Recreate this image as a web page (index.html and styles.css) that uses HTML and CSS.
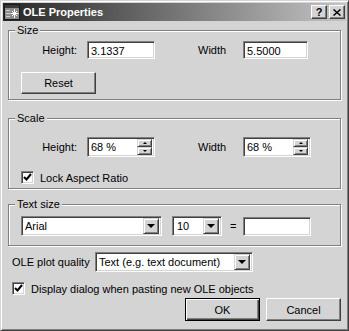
FILE: index.html
```html
<!DOCTYPE html>
<html lang="en">
<head>
  <meta charset="UTF-8" />
  <title>OLE Properties</title>
  <link rel="stylesheet" href="styles.css">
</head>
<body>
  <div class="window">
    <div class="titlebar">
      <svg class="app-icon" width="16" height="16" viewBox="0 0 16 16">
        <rect x="0.5" y="0.5" width="15" height="15" fill="#8c8c8c" stroke="#1a1a1a"/>
        <rect x="1" y="1" width="14" height="3" fill="#3a3a3a"/>
        <path d="M2 6.5h4M2 9.5h4M2 12.5h4" stroke="#cfcfcf"/>
        <path d="M10.5 5v9M6.5 9.5h8M8 7l5 5M13 7l-5 5" stroke="#fff"/>
      </svg>
      <span class="title">OLE Properties</span>
      <div class="caption-btns">
        <button class="cap-btn">?</button>
        <button class="cap-btn">
          <svg width="8" height="7" viewBox="0 0 8 7"><path d="M0.5 0.5l7 6M7.5 0.5l-7 6" stroke="#000" stroke-width="1.5"/></svg>
        </button>
      </div>
    </div>

    <div class="content">
      <fieldset class="group group-size">
        <legend>Size</legend>
        <div class="group-body size-body">
          <div class="row">
            <label class="lbl">Height:</label>
            <input class="field w68" value="3.1337">
            <label class="lbl2">Width</label>
            <input class="field w65" value="5.5000">
          </div>
          <button class="btn reset">Reset</button>
        </div>
      </fieldset>

      <fieldset class="group group-scale">
        <legend>Scale</legend>
        <div class="group-body scale-body">
          <div class="row">
            <label class="lbl">Height:</label>
            <div class="spin">
              <input value="68 %">
              <div class="spin-btns">
                <span class="spin-btn"><i class="arrow-up"></i></span>
                <span class="spin-btn"><i class="arrow-down"></i></span>
              </div>
            </div>
            <label class="lbl2">Width</label>
            <div class="spin">
              <input value="68 %">
              <div class="spin-btns">
                <span class="spin-btn"><i class="arrow-up"></i></span>
                <span class="spin-btn"><i class="arrow-down"></i></span>
              </div>
            </div>
          </div>
          <div class="check-row lock">
            <span class="check">
              <svg width="9" height="9" viewBox="0 0 9 9"><path d="M1 4l2.5 2.5L8 1" fill="none" stroke="#000" stroke-width="2"/></svg>
            </span>
            <span>Lock Aspect Ratio</span>
          </div>
        </div>
      </fieldset>

      <fieldset class="group group-text">
        <legend>Text size</legend>
        <div class="group-body text-body">
          <div class="row">
            <div class="combo font-combo">
              <span class="combo-text">Arial</span>
              <span class="drop"><i class="arrow-drop"></i></span>
            </div>
            <div class="combo size-combo">
              <span class="combo-text">10</span>
              <span class="drop"><i class="arrow-drop"></i></span>
            </div>
            <span class="equals">=</span>
            <input class="field w68 h19" value="">
          </div>
        </div>
      </fieldset>

      <div class="row plot-row">
        <span class="plot-lbl">OLE plot quality</span>
        <div class="combo plot-combo">
          <span class="combo-text">Text (e.g. text document)</span>
          <span class="drop"><i class="arrow-drop"></i></span>
        </div>
      </div>

      <div class="check-row display">
        <span class="check">
          <svg width="9" height="9" viewBox="0 0 9 9"><path d="M1 4l2.5 2.5L8 1" fill="none" stroke="#000" stroke-width="2"/></svg>
        </span>
        <span>Display dialog when pasting new OLE objects</span>
      </div>

      <div class="actions">
        <button class="btn default">OK</button>
        <button class="btn">Cancel</button>
      </div>
    </div>
  </div>
</body>
</html>
```

FILE: styles.css
```css
* {
  box-sizing: border-box;
}

body {
  margin: 0;
  background: #d4d4d4;
  font-family: 'Liberation Sans', Arial, sans-serif;
  font-size: 11px;
  color: #000;
}

.window {
  width: 349px;
  height: 331px;
  background: #d4d4d4;
  border: 1px solid;
  border-color: #d4d4d4 #404040 #404040 #d4d4d4;
  box-shadow: inset 1px 1px 0 #fff, inset -1px -1px 0 #808080;
  padding: 2px;
  display: flex;
  flex-direction: column;
}

/* title bar */
.titlebar {
  height: 18px;
  display: flex;
  align-items: center;
  padding: 0 1px 0 1px;
  background: linear-gradient(to right, #262626, #c4c4c4);
}

.app-icon {
  margin-right: 3px;
  flex: none;
}

.title {
  color: #fff;
  font-weight: bold;
  font-size: 11px;
}

.caption-btns {
  margin-left: auto;
  display: flex;
  gap: 2px;
}

.cap-btn {
  width: 16px;
  height: 14px;
  padding: 0;
  background: #d4d4d4;
  border: 1px solid;
  border-color: #fff #404040 #404040 #fff;
  box-shadow: inset -1px -1px 0 #808080;
  font-family: 'Liberation Sans', Arial, sans-serif;
  font-weight: bold;
  font-size: 11px;
  line-height: 12px;
  display: flex;
  align-items: center;
  justify-content: center;
}

/* dialog content */
.content {
  flex: 1;
  padding: 2px 5px 0 5px;
  display: flex;
  flex-direction: column;
}

.group {
  margin: 0;
  padding: 0;
  border: 1px solid #808080;
  box-shadow: 1px 1px 0 #fff, inset 1px 1px 0 #fff;
}

.group legend {
  margin-left: 6px;
  padding: 0 2px;
  line-height: 14px;
  height: 14px;
  background: #d4d4d4;
}

.group-body {
  padding-left: 12px;
}

.size-body {
  padding-top: 4px;
  padding-bottom: 5px;
}

.group-scale {
  margin-top: 11px;
}

.scale-body {
  padding-top: 12px;
  padding-bottom: 4px;
}

.group-text {
  margin-top: 8px;
}

.text-body {
  padding-top: 5px;
  padding-bottom: 9px;
}

.row {
  display: flex;
  align-items: center;
}

.lbl {
  width: 56px;
  text-align: right;
  margin-right: 10px;
}

.lbl2 {
  width: 45px;
  margin-left: 43px;
}

/* sunken fields */
.field,
.spin,
.combo,
.check {
  background: #fff;
  border: 1px solid;
  border-color: #808080 #fff #fff #808080;
  box-shadow: inset 1px 1px 0 #404040, inset -1px -1px 0 #d4d4d4;
}

.field {
  height: 18px;
  padding: 1px 3px 0;
  font: inherit;
  color: #000;
  outline: none;
}

.w68 {
  width: 68px;
}

.w65 {
  width: 65px;
}

.h19 {
  height: 19px;
}

.spin {
  width: 68px;
  height: 20px;
  display: flex;
  align-items: center;
  padding: 2px;
}

.spin input {
  flex: 1;
  min-width: 0;
  border: 0;
  padding: 0 0 0 1px;
  font: inherit;
  color: #000;
  outline: none;
  background: transparent;
}

.spin-btns {
  display: flex;
  flex-direction: column;
  width: 15px;
  height: 16px;
}

.spin-btn,
.drop {
  background: #d4d4d4;
  border: 1px solid;
  border-color: #d4d4d4 #404040 #404040 #d4d4d4;
  box-shadow: inset 1px 1px 0 #fff, inset -1px -1px 0 #808080;
  display: flex;
  align-items: center;
  justify-content: center;
}

.spin-btn {
  height: 8px;
}

.arrow-up,
.arrow-down,
.arrow-drop {
  width: 0;
  height: 0;
  border-left: 2px solid transparent;
  border-right: 2px solid transparent;
}

.arrow-up {
  border-bottom: 2px solid #000;
}

.arrow-down {
  border-top: 2px solid #000;
}

.arrow-drop {
  border-left-width: 4px;
  border-right-width: 4px;
  border-top: 4px solid #000;
}

/* combo boxes */
.combo {
  height: 20px;
  display: flex;
  align-items: center;
  padding: 2px;
}

.combo-text {
  flex: 1;
  padding-left: 1px;
  white-space: nowrap;
  overflow: hidden;
}

.drop {
  width: 16px;
  height: 16px;
}

.font-combo {
  width: 141px;
}

.size-combo {
  width: 50px;
  margin-left: 10px;
}

.size-combo .combo-text {
  padding-left: 2px;
}

.equals {
  margin-left: 8px;
  margin-right: 7px;
  width: 6px;
}

.plot-row {
  margin-top: 6px;
}

.plot-lbl {
  margin-left: 4px;
  width: 83px;
}

.plot-combo {
  width: 158px;
}

/* check boxes */
.check-row {
  display: flex;
  align-items: center;
  gap: 6px;
  height: 13px;
}

.check {
  width: 13px;
  height: 13px;
  display: flex;
  align-items: center;
  justify-content: center;
}

.lock {
  margin-top: 14px;
}

.display {
  margin-top: 10px;
  margin-left: 4px;
}

/* push buttons */
.btn {
  height: 23px;
  width: 75px;
  padding: 0;
  background: #d4d4d4;
  border: 1px solid;
  border-color: #fff #404040 #404040 #fff;
  box-shadow: inset -1px -1px 0 #808080;
  font: inherit;
  color: #000;
}

.reset {
  display: block;
  height: 22px;
  margin-top: 13px;
}

.actions {
  margin-top: 3px;
  display: flex;
  justify-content: flex-end;
  gap: 6px;
}

.btn.default {
  border: 1px solid #000;
  box-shadow: inset 1px 1px 0 #fff, inset -1px -1px 0 #404040, inset -2px -2px 0 #808080;
}
```
